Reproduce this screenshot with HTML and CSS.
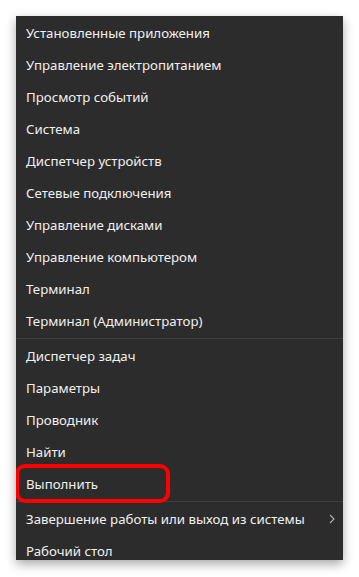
FILE: index.html
```html
<!DOCTYPE html>
<html lang="ru">
<head>
<meta charset="utf-8">
<title>Меню</title>
<link rel="stylesheet" href="styles.css">
</head>
<body>
<div class="page">
  <div class="menu">
    <div class="item">Установленные приложения</div>
    <div class="item">Управление электропитанием</div>
    <div class="item">Просмотр событий</div>
    <div class="item">Система</div>
    <div class="item">Диспетчер устройств</div>
    <div class="item">Сетевые подключения</div>
    <div class="item">Управление дисками</div>
    <div class="item">Управление компьютером</div>
    <div class="item">Терминал</div>
    <div class="item">Терминал (Администратор)</div>
    <div class="sep"></div>
    <div class="item">Диспетчер задач</div>
    <div class="item">Параметры</div>
    <div class="item">Проводник</div>
    <div class="item">Найти</div>
    <div class="item">Выполнить</div>
    <div class="sep"></div>
    <div class="item has-sub">Завершение работы или выход из системы
      <svg class="chev" width="6" height="10" viewBox="0 0 6 10"><path d="M1 1 L5 5 L1 9" fill="none" stroke="#b0b0b0" stroke-width="1.1"/></svg>
    </div>
    <div class="item">Рабочий стол</div>
    <div class="highlight"></div>
  </div>
</div>
</body>
</html>
```
FILE: styles.css
```css
html, body {
  margin: 0;
  padding: 0;
  background: #ffffff;
}
.page {
  padding: 16px;
}
.menu {
  position: relative;
  box-sizing: border-box;
  width: 327px;
  height: 544px;
  padding-top: 1px;
  overflow: hidden;
  background: #2c2c2c;
  box-shadow: 0 4px 10px rgba(0, 0, 0, 0.35);
  font-family: "Noto Sans", "Open Sans", sans-serif;
  font-size: 13.25px;
  color: #f0f0f0;
}
.item {
  height: 32px;
  line-height: 32px;
  padding-left: 10px;
  white-space: nowrap;
  display: flex;
  align-items: center;
}
.has-sub {
  justify-content: space-between;
  padding-right: 8px;
}
.chev {
  display: block;
}
.sep {
  height: 1px;
  margin-top: 1px;
  margin-bottom: 1px;
  background: #3d3d3d;
}
.highlight {
  position: absolute;
  left: -1px;
  top: 448px;
  width: 147px;
  height: 31px;
  border: 4px solid #ff0000;
  border-radius: 10px;
}
```
